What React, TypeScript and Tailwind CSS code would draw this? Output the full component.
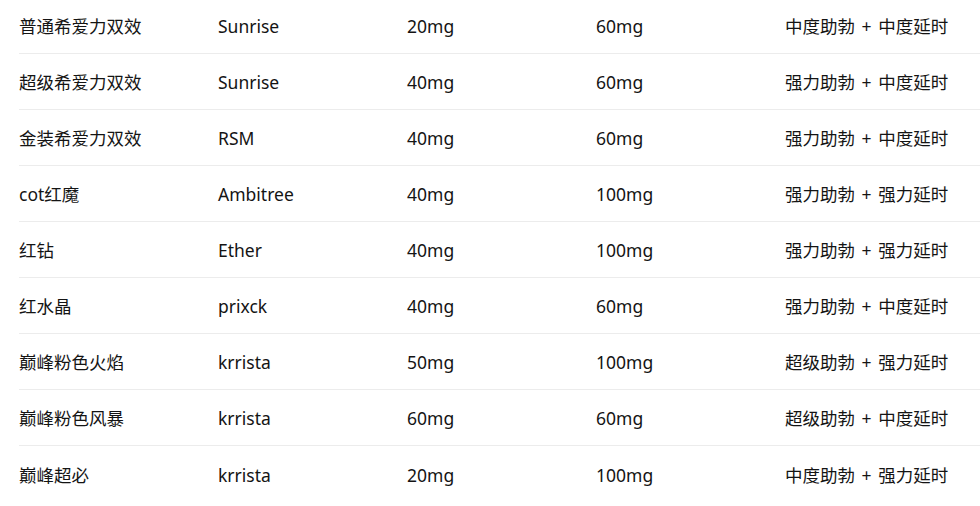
const rows = [
  ["普通希爱力双效", "Sunrise", "20mg", "60mg", "中度助勃 + 中度延时"],
  ["超级希爱力双效", "Sunrise", "40mg", "60mg", "强力助勃 + 中度延时"],
  ["金装希爱力双效", "RSM", "40mg", "60mg", "强力助勃 + 中度延时"],
  ["cot红魔", "Ambitree", "40mg", "100mg", "强力助勃 + 强力延时"],
  ["红钻", "Ether", "40mg", "100mg", "强力助勃 + 强力延时"],
  ["红水晶", "prixck", "40mg", "60mg", "强力助勃 + 中度延时"],
  ["巅峰粉色火焰", "krrista", "50mg", "100mg", "超级助勃 + 强力延时"],
  ["巅峰粉色风暴", "krrista", "60mg", "60mg", "超级助勃 + 中度延时"],
  ["巅峰超必", "krrista", "20mg", "100mg", "中度助勃 + 强力延时"],
];

function Effect({ text }: { text: string }) {
  const [a, b] = text.split(" + ");
  return (
    <>
      {a} <span className="mx-[2px]">+</span> {b}
    </>
  );
}

export default function App() {
  return (
    <div className="w-[980px] h-[506px] overflow-hidden bg-white pl-[19px] font-['Noto_Sans','Noto_Sans_CJK_SC',sans-serif] text-[17.5px] text-[#141414]">
      <div className="-mt-[2px]">
        {rows.map((r, i) => (
          <div
            key={i}
            className={`grid grid-cols-[199px_189px_189px_189px_1fr] h-[56px] items-center ${
              i < rows.length - 1 ? "border-b border-[#ececec]" : ""
            }`}
          >
            {r.map((c, j) => (
              <div key={j} className="whitespace-nowrap pt-[2px]">
                {j === 4 ? <Effect text={c} /> : c}
              </div>
            ))}
          </div>
        ))}
      </div>
    </div>
  );
}
